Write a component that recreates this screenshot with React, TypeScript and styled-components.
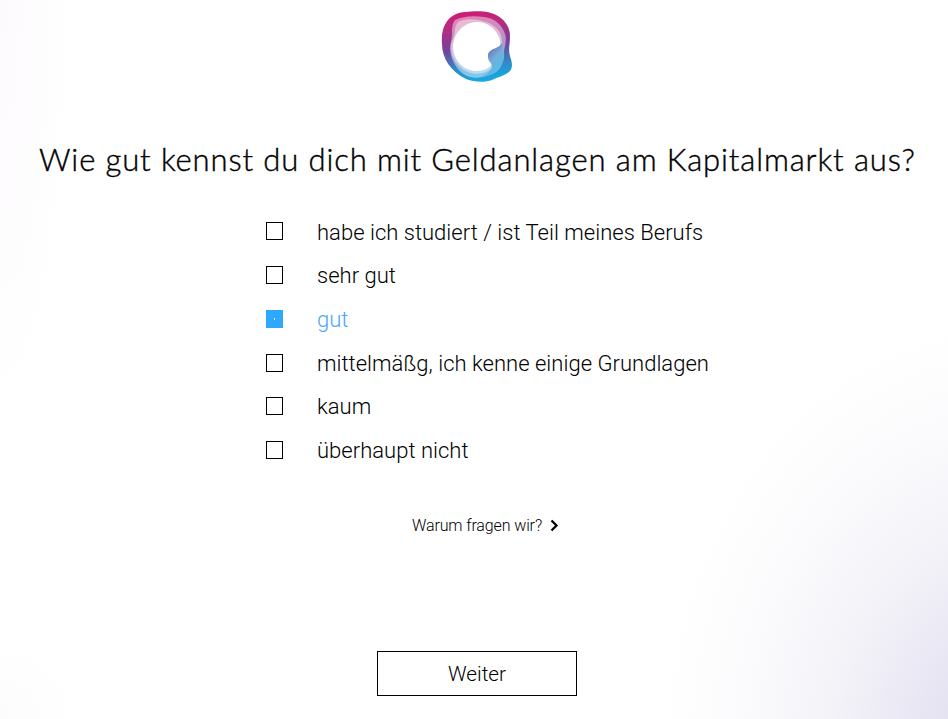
import React, { useState } from "react";
import styled, { createGlobalStyle } from "styled-components";

const GlobalStyle = createGlobalStyle`
  *, *::before, *::after { box-sizing: border-box; }
  body { margin: 0; background: #fff; }
`;

const Page = styled.main`
  height: 719px;
  display: flex;
  flex-direction: column;
  overflow: hidden;
  color: #000;
  font-family: Roboto, "Liberation Sans", sans-serif;
  font-weight: 300;
  background:
    radial-gradient(ellipse 350px 430px at 1010px 750px, #dedcf0 0%, #e7e5f3 25%, #f3f2f8 50%, #fbfbfd 77%, rgba(255, 255, 255, 0) 100%),
    radial-gradient(ellipse 70px 420px at 0 0, #fdfafd 0%, rgba(255, 255, 255, 0) 100%),
    radial-gradient(circle 80px at 0 719px, #fcfcfc 0%, rgba(255, 255, 255, 0) 100%),
    #fff;
`;

const Header = styled.header`
  height: 90px;
  padding: 10px 0 0 441px;
  svg { display: block; }
`;

const Question = styled.h1`
  margin: 48px 0 0 39px;
  height: 42px;
  font-family: Lato, sans-serif;
  font-size: 31px;
  line-height: 42px;
  font-weight: 300;
  letter-spacing: 0.88px;
  -webkit-text-stroke: 0.4px #000;
  white-space: nowrap;
`;

const Options = styled.div`
  display: grid;
  grid-auto-rows: 43.7px;
  margin: 29.6px 0 0 266px;
`;

const Option = styled.button<{ $selected: boolean }>`
  display: flex;
  align-items: center;
  gap: 34px;
  padding: 0;
  border: 0;
  background: none;
  font: 300 22px/30px Roboto, sans-serif;
  letter-spacing: 0.02px;
  color: ${({ $selected }) => ($selected ? "#4ba6f5" : "#000")};
  text-align: left;
  white-space: nowrap;
`;

const Answer = styled.span`
  padding-top: 2.6px;
`;

const Box = styled.span<{ $selected: boolean }>`
  display: grid;
  place-items: center;
  width: 17px;
  height: 18px;
  border: 1px solid ${({ $selected }) => ($selected ? "#2ea8fc" : "#000")};
  background: ${({ $selected }) => ($selected ? "#2ea8fc" : "transparent")};
  &::after {
    content: "";
    width: 1px;
    height: 2px;
    background: ${({ $selected }) => ($selected ? "#fff" : "transparent")};
  }
`;

const Reason = styled.button`
  display: flex;
  align-items: center;
  gap: 8px;
  align-self: flex-start;
  height: 24px;
  margin: 42.200px 0 0 412px;
  padding: 0;
  border: 0;
  background: none;
  color: #000;
  font: 300 16px/24px Roboto, sans-serif;
  letter-spacing: -0.12px;
  white-space: nowrap;
`;

const Next = styled.button`
  align-self: flex-start;
  width: 200px;
  height: 45px;
  margin: 113px 0 0 377px;
  padding: 2px 0 0;
  border: 1px solid #000;
  background: #fff;
  color: #000;
  font: 300 20.800px/41px Roboto, sans-serif;
`;

const answers = [
  "habe ich studiert / ist Teil meines Berufs",
  "sehr gut",
  "gut",
  "mittelmäßg, ich kenne einige Grundlagen",
  "kaum",
  "überhaupt nicht",
];

function Logo() {
  return (
    <svg width="72" height="72" viewBox="0 0 72 72" aria-hidden="true">
      <defs>
        <linearGradient id="ring" x1="34" y1="0" x2="44" y2="72" gradientUnits="userSpaceOnUse">
          <stop offset="0" stopColor="#d01b73" />
          <stop offset=".18" stopColor="#b82b80" />
          <stop offset=".5" stopColor="#77409b" />
          <stop offset=".76" stopColor="#3188c5" />
          <stop offset="1" stopColor="#15ace5" />
        </linearGradient>
        <linearGradient id="lobe" x1="48" y1="42" x2="62" y2="56" gradientUnits="userSpaceOnUse">
          <stop offset="0" stopColor="#6c80bf" />
          <stop offset=".4" stopColor="#76add9" />
          <stop offset="1" stopColor="#55bde9" />
        </linearGradient>
      </defs>
      <path fill="url(#ring)" d="M30 1.500C39 .7 49 1 57 6c8 5 12 12 12 20 0 9-2 13 0 20 1.500 5 4 11-1 16-5 4-11 5-17 8-8 3-18 2-26-1C10 62 1 48 1 34 0 22 3 13 10 7c5-4 12-5.200 20-5.500Z" />
      <path fill="#fff" fillOpacity=".45" d="M14 10C22 6 33 5.500 43 7c11 1 18 8 21 17 2 6 0 11-1 17 1 8-2 16-8 20-8 6-17 8-26 6C18 64 10 52 9 39c0-5 2-9 2-15 0-5 0-10 3-14Z" />
      <path fill="#fff" fillOpacity=".42" d="M19 11c8-3 18-2 26 1 9 3 15 9 16 18 1 14-4 26-14 31-9 5-21 3-28-4-8-7-10-17-9-23 3-7 4-12 4-15 1-4 2-7 5-8Z" />
      <path fill="#fff" d="M35.500 12C46 12 54 18 58 27c3 9 1 18-5 25-4 6-10 9-17 9C23 61 13 51 12 38c0-14 9-25 23.500-26Z" />
      <path fill="url(#lobe)" d="M61 33c0 4 2 8 2 12-1 8-3 14-9 18-5 2-9 4-15 4 5-2 9-4 11-8 2-3 0-6-2-8-1-3-2-6 0-9 4-4 10-4 13-9Z" />
    </svg>
  );
}

export default function App() {
  const [selected, setSelected] = useState(2);
  return (
    <>
      <GlobalStyle />
      <Page>
        <Header><Logo /></Header>
        <Question>Wie gut kennst du dich mit Geldanlagen am Kapitalmarkt aus?</Question>
        <Options role="radiogroup">
          {answers.map((answer, index) => (
            <Option key={answer} role="radio" aria-checked={index === selected} $selected={index === selected} onClick={() => setSelected(index)}>
              <Box $selected={index === selected} />
              <Answer>{answer}</Answer>
            </Option>
          ))}
        </Options>
        <Reason>
          <span>Warum fragen wir?</span>
          <svg width="9" height="14" viewBox="0 0 9 14" aria-hidden="true">
            <path d="M1.500 1.500 6.500 6.500 1.500 11.500" fill="none" stroke="#000" strokeWidth="2.300" />
          </svg>
        </Reason>
        <Next>Weiter</Next>
      </Page>
    </>
  );
}
